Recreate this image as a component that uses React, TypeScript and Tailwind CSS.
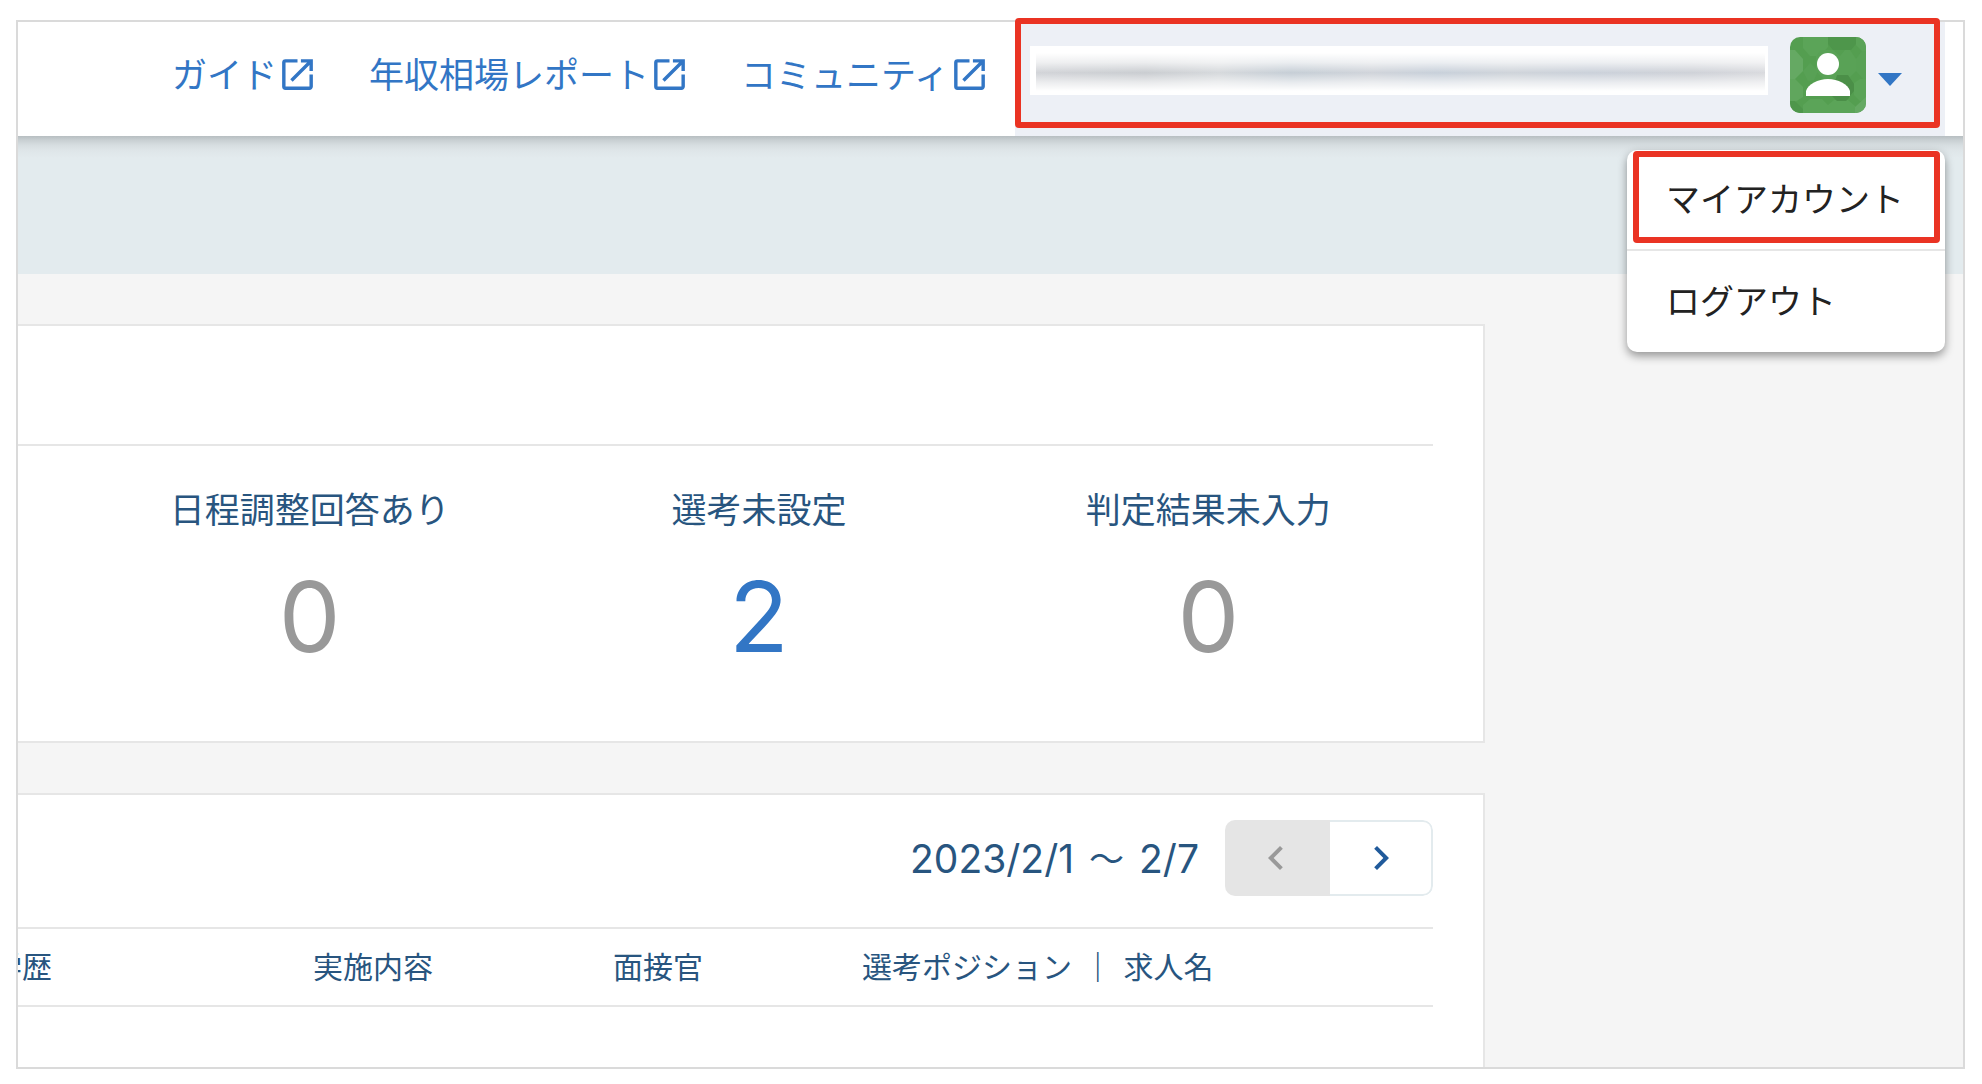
import { MdChevronLeft, MdChevronRight, MdOpenInNew } from "react-icons/md";

const links = ["ガイド", "年収相場レポート", "コミュニティ"];

const stats = [
  { label: "日程調整回答あり", value: 0 },
  { label: "選考未設定", value: 2 },
  { label: "判定結果未入力", value: 0 },
];

function Avatar() {
  return (
    <svg viewBox="0 0 76 76" className="size-[76px] shrink-0 rounded-[10px]" aria-hidden="true">
      <rect width="76" height="76" fill="#549e50" />
      <path d="M13 0h25v10l-8 9H20l-7-8z" fill="#5ba458" />
      <path d="M38 0h28v7l-5 6H43l-5-6z" fill="#4e964b" />
      <path d="M66 0h10v14h-4l-6-6z" fill="#5aa357" />
      <path d="M0 13h5l8 9v12l-8 8H0z" fill="#65a963" />
      <path d="M26 19l5-6h12l7 6v0l5-6h5l6 9v12l-8 8H34l-8-8z" fill="#59a256" />
      <path d="M66 22l6-8h4v28h-3l-7-8z" fill="#58a155" />
      <path d="M13 34l7-8 8 8-4 9-6 1z" fill="#58a155" />
      <path d="M0 42h5l8 8v10l-8 5H0z" fill="#60a65d" />
      <path d="M64 46l6-4h6v22h-6l-6-6z" fill="#5aa357" />
      <path d="M13 76v-8l7-6h12l6 6v8zM38 76v-8l6-5h14l7 6v7z" fill="#5ba458" />
      <path d="M0 64h5l8 8v4H0z" fill="#4e964b" />
      <path d="M76 60v16H65v-6z" fill="#65a963" />
      <path d="M47 38h11l6 9v7l-5 6v1l-3 3H47l-6-6z" fill="#4b8f48" />
      <circle cx="38" cy="27" r="11" fill="#fff" />
      <path d="M16 59v-5C18 47 28 42 38 42s20 5 22 12v5z" fill="#fff" />
    </svg>
  );
}

export default function App() {
  return (
    <div className="flex h-screen flex-col bg-white pt-5 pr-[17px] pb-[15px] pl-4 font-['Hiragino_Sans','Noto_Sans_CJK_JP',sans-serif] text-[#28557f]">
      <div className="relative flex flex-1 flex-col border-2 border-[#dadada] bg-[#f5f5f5]">
        <header className="relative z-10 flex h-[114px] items-stretch justify-end bg-white pr-[18px]">
          <nav className="flex items-start gap-[51px] pt-[25px] pr-[25px]">
            {links.map((label) => (
              <a key={label} href="#" className="flex items-center text-[35px] leading-[52px] whitespace-nowrap text-[#3276c5]">
                {label}
                <MdOpenInNew className="mt-[2px] size-[41px]" />
              </a>
            ))}
          </nav>
          <div className="relative w-[930px] bg-[#edf0f6]">
            <button
              type="button"
              aria-label="アカウントメニュー"
              aria-expanded="true"
              className="absolute top-[-4px] left-0 flex h-[110px] w-[925px] items-center rounded-[4px] border-[6px] border-[#ea3323] pl-[9px]"
            >
              <span className="mb-[5px] flex h-[49px] w-[738px] items-center overflow-hidden bg-white pt-[2px] pr-[3px] pl-[6px]">
                <span className="h-[38px] w-full bg-[linear-gradient(to_bottom,white,rgba(255,255,255,0.65)_25%,transparent_52%,rgba(255,255,255,0.6)_78%,white),linear-gradient(to_right,#d2d4d8,#cacdd1_15%,#d6d9dc_25%,#c6ced6_35%,#d0d4da_46%,#c8d0da_55%,#cfd4da_65%,#cbd1da_76%,#cfd2d8_90%,#d9dade)]" />
              </span>
              <span className="mt-1 ml-[22px] flex items-center gap-3">
                <Avatar />
                <svg viewBox="0 0 24 13" className="mt-2 h-[13px] w-6" aria-hidden="true">
                  <path d="M0 0h24L12 13z" fill="#3276c5" />
                </svg>
              </span>
            </button>
          </div>
          <div role="menu" className="absolute top-[128px] right-[18px] w-[318px] rounded-[10px] bg-white text-[34px] leading-[50px] text-[#222] shadow-[0_4px_10px_rgba(0,0,0,0.4)]">
            <div className="border-b-2 border-[#e6e6e6] pt-px pr-[5px] pb-[6px] pl-[6px]">
              <button type="button" role="menuitem" className="block h-[92px] w-full rounded-[4px] border-[6px] border-[#ea3323] pt-[2px] pl-[27px] text-left whitespace-nowrap">
                マイアカウント
              </button>
            </div>
            <button type="button" role="menuitem" className="block h-[101px] w-full pb-1 pl-[39px] text-left">
              ログアウト
            </button>
          </div>
        </header>

        <div className="h-[138px] bg-[#e3ebee] bg-[linear-gradient(to_bottom,#b7bec1,#c8cfd2_4px,#d6dde0_9px,#dfe6e9_15px,#e3ebee_22px)]" />

        <main className="flex flex-1 flex-col gap-[50px] pt-[50px] pr-[478px]">
          <section className="border-y-2 border-r-2 border-[#e6e6e6] bg-white pr-[50px]">
            <div className="h-[120px] border-b-2 border-[#e6e6e6]" />
            <dl className="ml-[67px] grid h-[295px] grid-cols-3 pt-[36px] text-center">
              {stats.map(({ label, value }) => (
                <div key={label}>
                  <dt className="text-[35px] leading-[52px]">{label}</dt>
                  <dd className={value ? "mt-[31px] font-['Inter'] text-[98px] leading-[104px] text-[#3276c5]" : "mt-[31px] font-['Inter'] text-[98px] leading-[104px] text-[#999]"}>
                    {value}
                  </dd>
                </div>
              ))}
            </dl>
          </section>

          <section className="flex-1 border-t-2 border-r-2 border-[#e6e6e6] bg-white pr-[50px]">
            <div className="flex h-[132px] items-start justify-end gap-[26px] pt-[25px]">
              <p className="flex gap-[15px] font-['Inter','Noto_Sans_CJK_JP'] text-[39px] leading-[78px]">
                <span>2023/2/1</span>
                <span className="text-[35px]">〜</span>
                <span>2/7</span>
              </p>
              <div className="flex h-[76px] w-[208px] overflow-hidden rounded-[10px]">
                <button type="button" disabled aria-label="前の週" className="flex w-[105px] items-center justify-center bg-[#e5e5e5] pr-1 text-[#999]">
                  <MdChevronLeft className="size-12" />
                </button>
                <button type="button" aria-label="次の週" className="flex flex-1 items-center justify-center rounded-r-[10px] border-y-2 border-r-2 border-[#e3ebee] text-[#205a9b]">
                  <MdChevronRight className="size-12" />
                </button>
              </div>
            </div>
            <div className="overflow-hidden">
              <table className="w-full table-fixed border-collapse text-left text-[30px] leading-[44px]">
                <thead>
                  <tr className="h-[78px] border-y-2 border-[#e6e6e6]">
                    <th scope="col" className="w-[295px] pb-1 font-normal"><span className="-ml-[26px]">学歴</span></th>
                    <th scope="col" className="w-[300px] pb-1 font-normal">実施内容</th>
                    <th scope="col" className="w-[249px] pb-1 font-normal">面接官</th>
                    <th scope="col" className="pb-1 font-normal">
                      選考ポジション <span className="mx-1 font-bold">｜</span> 求人名
                    </th>
                  </tr>
                </thead>
              </table>
            </div>
          </section>
        </main>
      </div>
    </div>
  );
}
